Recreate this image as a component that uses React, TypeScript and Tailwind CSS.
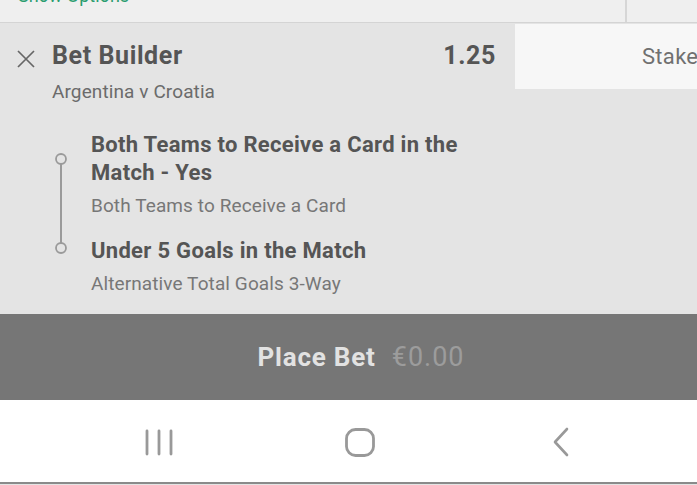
const legs = [
  { title: 'Both Teams to Receive a Card in the Match - Yes', market: 'Both Teams to Receive a Card' },
  { title: 'Under 5 Goals in the Match', market: 'Alternative Total Goals 3-Way' },
];

function Timeline() {
  return (
    <svg width="20" height="110" viewBox="0 0 20 110" className="mt-[18px] shrink-0">
      <line x1="10" y1="15" x2="10" y2="94" stroke="#9a9a9a" strokeWidth="2" />
      <circle cx="10" cy="10" r="5" fill="#e4e4e4" stroke="#9a9a9a" strokeWidth="1.8" />
      <circle cx="10" cy="99" r="5" fill="#e4e4e4" stroke="#9a9a9a" strokeWidth="1.8" />
    </svg>
  );
}

function NavBar() {
  return (
    <div className="flex h-[84px] items-center border-b-2 border-[#8a8a8a] bg-white pl-[58px] pt-[2px]">
      <div className="flex w-[201px] justify-center">
        <svg width="28" height="27" viewBox="0 0 28 27">
          <g stroke="#999" strokeWidth="2.8" strokeLinecap="round">
            <line x1="2" y1="2" x2="2" y2="25" />
            <line x1="14" y1="2" x2="14" y2="25" />
            <line x1="26" y1="2" x2="26" y2="25" />
          </g>
        </svg>
      </div>
      <div className="flex w-[201px] justify-center">
        <svg width="30" height="29" viewBox="0 0 30 29">
          <rect x="1.5" y="1.5" width="27" height="26" rx="9" fill="none" stroke="#999" strokeWidth="2.8" />
        </svg>
      </div>
      <div className="flex w-[201px] justify-center">
        <svg width="18" height="30" viewBox="0 0 18 30">
          <polyline points="15,2 3,15 15,28" fill="none" stroke="#999" strokeWidth="2.6" strokeLinecap="round" strokeLinejoin="round" />
        </svg>
      </div>
    </div>
  );
}

export default function App() {
  return (
    <div className="w-[697px] h-[485px] overflow-hidden bg-[#e4e4e4] font-['Roboto',sans-serif]">
      {/* top strip */}
      <div className="flex h-[23px] border-b border-[#d4d4d4] bg-[#efefef]">
        <div className="flex-1 overflow-hidden pl-[18px]">
          <div className="-mt-[14px] text-[18px] leading-[20px] text-[#2a9d6f]">Show Options</div>
        </div>
        <div className="w-[72px] border-l-2 border-[#d6d6d6]" />
      </div>

      <div className="h-[291px]">
        <div className="flex">
          <div className="flex flex-1 items-start pt-[17px]">
            <svg width="18" height="18" viewBox="0 0 18 18" className="ml-[17px] mt-[10px] shrink-0">
              <path d="M1 1 L17 17 M17 1 L1 17" stroke="#666" strokeWidth="1.7" />
            </svg>
            <div className="ml-[17px] flex-1">
              <div className="text-[25px] font-bold leading-[32px] tracking-[0.6px] text-[#555]">Bet Builder</div>
              <div className="mt-[8px] text-[19px] leading-[24px] tracking-[0.1px] text-[#6b6b6b]">Argentina v Croatia</div>
            </div>
            <div className="pr-[19px] text-[25px] font-bold leading-[32px] tracking-[0.6px] text-[#555]">1.25</div>
          </div>
          <div className="mt-[1px] flex h-[65px] w-[182px] items-center overflow-hidden bg-[#f7f7f7] pl-[127px]">
            <span className="whitespace-nowrap text-[22px] tracking-[0.3px] text-[#707070]">Stake</span>
          </div>
        </div>

        <div className="mt-[27px] flex gap-[20px] pl-[51px]">
          <Timeline />
          <div className="w-[400px]">
            {legs.map((leg, i) => (
              <div key={i} className={i === 0 ? '' : 'mt-[18px]'}>
                <div className="text-[22px] font-bold leading-[28px] tracking-[0.3px] text-[#555]">{leg.title}</div>
                <div className="mt-[6px] text-[19px] leading-[26px] tracking-[0.1px] text-[#777]">{leg.market}</div>
              </div>
            ))}
          </div>
        </div>
      </div>

      <div className="flex h-[86px] items-center justify-center gap-[16px] bg-[#767676] pl-[25px]">
        <span className="text-[26px] font-bold tracking-[0.8px] text-[#e2e2e2]">Place Bet</span>
        <span className="text-[27px] tracking-[1px] text-[#9c9c9c]">€0.00</span>
      </div>

      <NavBar />
    </div>
  );
}
